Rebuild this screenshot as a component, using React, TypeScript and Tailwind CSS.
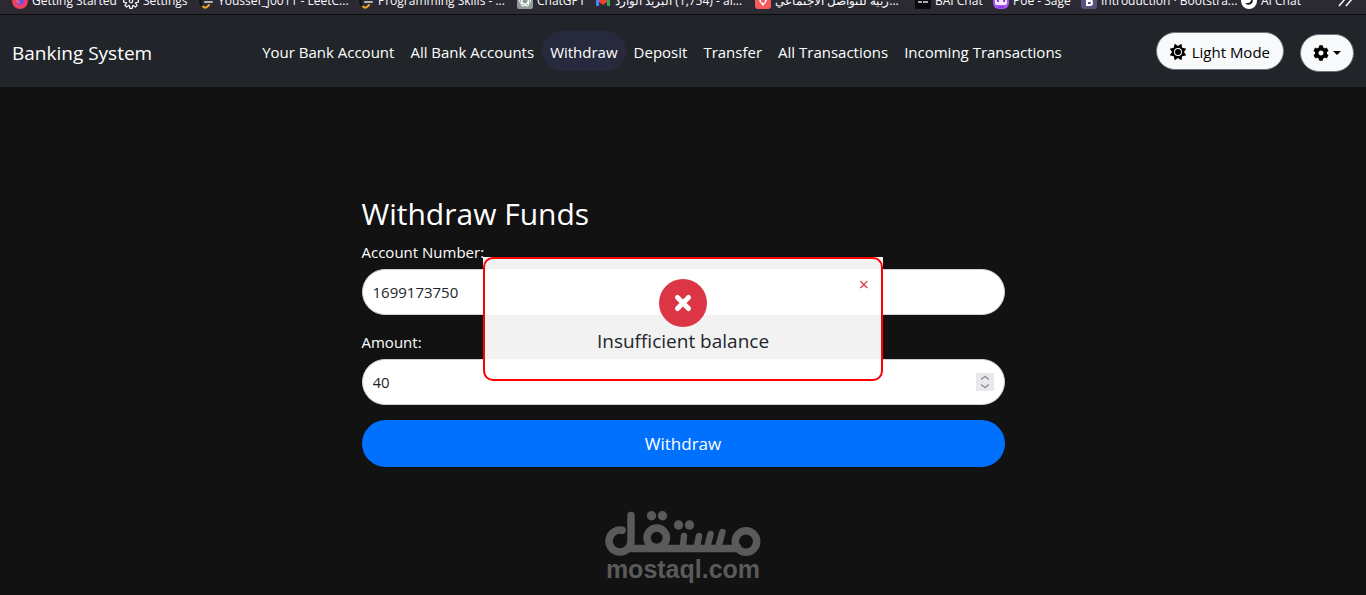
import type { ReactNode } from "react";
import { FaCog } from "react-icons/fa";
import { FaSun } from "react-icons/fa6";
import { VscSettingsGear } from "react-icons/vsc";

interface BookmarkProps {
    icon: ReactNode;
    width: string;
    children: ReactNode;
}

const links = [
    "Your Bank Account",
    "All Bank Accounts",
    "Withdraw",
    "Deposit",
    "Transfer",
    "All Transactions",
    "Incoming Transactions",
];

const FirefoxIcon = () => (
    <svg viewBox="0 0 16 16" className="size-4">
        <circle cx="8" cy="8" r="8" fill="#f0405f" />
        <path d="M1 5a8 8 0 0 0 14 7a8 8 0 0 1-14-7z" fill="#ff8a3c" />
        <circle cx="8" cy="8" r="4" fill="#7a4be8" />
        <path d="M4 7c2 0 3 1 4 3c-2 1-4-1-4-3z" fill="#ff7a45" />
    </svg>
);

const LeetCodeIcon = () => (
    <svg viewBox="0 0 16 16" className="size-4" fill="none" strokeLinecap="round" strokeWidth="2">
        <path d="M9 1L3 7q-2 2 0 4l2 2.500" stroke="#111" />
        <path d="M5 13.500q2 2 4 .5l2-2" stroke="#f0a030" />
        <path d="M7 9h7" stroke="#b3b3b3" />
    </svg>
);

const ChatGptIcon = () => (
    <svg viewBox="0 0 16 16" className="size-4" fill="none" stroke="#fff">
        <rect width="16" height="16" rx="2" fill="#8d9a97" stroke="none" />
        <ellipse cx="8" cy="8" rx="5.500" ry="3" />
        <ellipse cx="8" cy="8" rx="5.500" ry="3" transform="rotate(60 8 8)" />
        <ellipse cx="8" cy="8" rx="5.500" ry="3" transform="rotate(120 8 8)" />
    </svg>
);

const MailIcon = () => (
    <svg viewBox="0 0 16 16" className="size-4">
        <path d="M1 3h3v10H1z" fill="#4285f4" />
        <path d="M12 3h3v10h-3z" fill="#34a853" />
        <path d="M4 4l4 3l4-3v5l-4 3l-4-3z" fill="#ea4335" />
    </svg>
);

const PinIcon = () => (
    <svg viewBox="0 0 16 16" className="size-4">
        <rect width="16" height="16" rx="3" fill="#f45b5b" />
        <path d="M4 6a4 4 0 0 1 8 0c0 3-2 4-4 7c-2-3-4-4-4-7z" fill="#fff" />
        <circle cx="8" cy="8" r="2" fill="#f45b5b" />
    </svg>
);

const BaiIcon = () => (
    <svg viewBox="0 0 16 16" className="size-4">
        <rect width="16" height="16" fill="#0b0b0d" />
        <path d="M3 9h4M8 9h5" stroke="#aaa" strokeWidth="2" />
    </svg>
);

const PoeIcon = () => (
    <svg viewBox="0 0 16 16" className="size-4">
        <rect width="16" height="16" rx="6" fill="#a855f7" />
        <rect x="2" y="5" width="12" height="7" rx="2" fill="#f3e8ff" />
        <path d="M4 8h2M10 8h2M5 14h6" stroke="#8b3fe0" strokeWidth="2" />
    </svg>
);

const BootstrapIcon = () => (
    <svg viewBox="0 0 16 16" className="size-4">
        <rect width="16" height="16" rx="3" fill="#56547c" />
        <path d="M6 3v9h3a2 2 0 0 0 0-4H6h3a2 2 0 0 0 0-4H6" fill="none" stroke="#fff" strokeWidth="2" />
    </svg>
);

const AiChatIcon = () => (
    <svg viewBox="0 0 16 16" className="size-4">
        <circle cx="8" cy="8" r="8" fill="#fff" />
        <path d="M11 5a4 4 0 1 1-7 5c4 1 6-1 7-5z" fill="#16161c" />
    </svg>
);

const Bookmark = ({ icon, width, children }: BookmarkProps) => (
    <a href="#" className={`flex shrink-0 items-center gap-1 whitespace-nowrap ${width}`}>
        <span className="shrink-0">{icon}</span>
        <span>{children}</span>
    </a>
);

const BookmarksBar = () => (
    <div className="flex h-[15px] items-end overflow-hidden border-b border-[#0c0c0d] bg-[#2b2a33] px-3 pb-[5px] text-xs text-[#fbfbfe]">
        <Bookmark icon={<FirefoxIcon />} width="w-[111px]">Getting Started</Bookmark>
        <Bookmark icon={<VscSettingsGear size={16} />} width="w-[75px]">Settings</Bookmark>
        <Bookmark icon={<LeetCodeIcon />} width="w-[160px]">Youssef_J0011 - LeetC...</Bookmark>
        <Bookmark icon={<LeetCodeIcon />} width="w-[159px]">Programming Skills - ...</Bookmark>
        <Bookmark icon={<ChatGptIcon />} width="w-[78px]">ChatGPT</Bookmark>
        <Bookmark icon={<MailIcon />} width="w-[160px]"><bdi>البريد الوارد</bdi> (1,754) - al...</Bookmark>
        <Bookmark icon={<PinIcon />} width="w-[160px]"><bdi dir="rtl">...ربية للتواصل الاجتماعي</bdi></Bookmark>
        <Bookmark icon={<BaiIcon />} width="w-[78px]">BAI Chat</Bookmark>
        <Bookmark icon={<PoeIcon />} width="w-[88px]">Poe - Sage</Bookmark>
        <Bookmark icon={<BootstrapIcon />} width="w-[160px]">Introduction · Bootstra...</Bookmark>
        <Bookmark icon={<AiChatIcon />} width="w-[80px]">AI Chat</Bookmark>
        <button type="button" aria-label="More bookmarks" className="ml-auto">
            <svg viewBox="0 0 16 16" className="size-4" fill="none" stroke="currentColor" strokeWidth="1.500">
                <path d="M3 0l4 6l-6 7M10 0l4 6l-6 7" />
            </svg>
        </button>
    </div>
);

const Navbar = () => (
    <nav className="flex h-[72px] items-center bg-[#212529] px-3">
        <a href="#" className="mt-1 mr-4 text-[19px] whitespace-nowrap">Banking System</a>
        <ul className="mx-auto flex">
            {links.map((link) => (
                <li key={link}>
                    <a
                        href="#"
                        className={`block rounded-[20px] px-2 pt-[9px] pb-[7px] leading-6 whitespace-nowrap ${link === "Withdraw" ? "bg-[#27293d]" : ""}`}
                    >
                        {link}
                    </a>
                </li>
            ))}
        </ul>
        <div className="flex items-center gap-4">
            <button type="button" className="flex h-[38px] items-center gap-[6px] rounded-full border border-[#6c757d] bg-[#f8f9fa] px-[13px] pt-[2px] whitespace-nowrap text-black">
                <FaSun size={16} />
                Light Mode
            </button>
            <button type="button" aria-label="Settings" className="mt-1 flex h-[38px] items-center gap-1 rounded-full border border-[#6c757d] bg-[#f8f9fa] px-3 text-black">
                <FaCog size={16} />
                <svg viewBox="0 0 8 4" className="h-1 w-2" fill="currentColor">
                    <path d="M0 0h8L4 4z" />
                </svg>
            </button>
        </div>
    </nav>
);

const inputStyle =
    "block h-[46px] w-full rounded-full border border-[#ced4da] bg-white px-[10px] text-[#212529] outline-none [appearance:textfield]";

const WithdrawForm = () => (
    <form className="mx-auto mt-[91px] w-1/2 rounded-[10px] px-5 pt-[18px] pb-5 shadow-[0_0_10px_rgba(0,0,0,0.1)]">
        <h2 className="mb-2 text-[30px] leading-9">Withdraw Funds</h2>
        <label htmlFor="account" className="mb-[5px] block leading-6">Account Number:</label>
        <input id="account" type="text" defaultValue="1699173750" className={inputStyle} />
        <label htmlFor="amount" className="mt-[15px] mb-[5px] block leading-6">Amount:</label>
        <div className="relative">
            <input id="amount" type="number" defaultValue="40" className={inputStyle} />
            <svg viewBox="0 0 18 18" className="absolute top-[14px] right-[11px] size-[18px]" fill="none" stroke="#8f8f9d" strokeWidth="1.500">
                <rect width="18" height="18" fill="#e9e9ed" stroke="none" />
                <path d="M5 6.500l4-3l4 3M5 11.500l4 3l4-3" />
            </svg>
        </div>
        <button type="submit" className="mt-[15px] block h-[47px] w-full rounded-full bg-[#0070ff] text-[17px]">
            Withdraw
        </button>
    </form>
);

const ErrorPopup = () => (
    <div className="absolute inset-x-0 top-[257px] flex justify-center">
        <div role="alert" className="w-[400px] bg-white/95">
            <div className="relative flex flex-col items-center rounded-[10px] border-2 border-[#ff0000] pt-5 pb-6">
                <button type="button" aria-label="Close" className="absolute top-[13px] right-2 p-1 text-lg leading-4 text-[#dc3545]">
                    ×
                </button>
                <svg viewBox="0 0 48 48" className="size-12">
                    <circle cx="24" cy="24" r="24" fill="#dc3545" />
                    <path d="M18.500 18.500l11 11M29.500 18.500l-11 11" stroke="#fff" strokeWidth="5" strokeLinecap="round" />
                </svg>
                <p className="text-[19px] leading-7 text-[#212529]">Insufficient balance</p>
            </div>
        </div>
    </div>
);

const MostaqlLogo = () => (
    <div className="mt-6 flex flex-col items-center text-[#5a5a5a]">
        <svg viewBox="0 0 156 46" className="h-[46px] w-[156px]" fill="none" stroke="currentColor" strokeWidth="7.500" strokeLinecap="round" role="img" aria-label="مستقل">
            <path d="M17 19.200A11 11 0 1 0 26 30V4.500" />
            <path d="M24 37.500h112" strokeLinecap="butt" />
            <circle cx="51.700" cy="26.700" r="9.700" />
            <circle cx="141" cy="30.500" r="10.700" />
            <path d="M79 25l-1 10M94 25l-2 10M105.500 23l-3 12M117.500 21l-4 14" strokeWidth="6.500" />
            <g fill="currentColor" stroke="none">
                <circle cx="46.500" cy="4.800" r="4.700" />
                <circle cx="57.500" cy="4.800" r="4.700" />
                <circle cx="73.500" cy="14" r="4.700" />
                <circle cx="84.500" cy="14" r="4.700" />
            </g>
        </svg>
        <span className="font-['Liberation_Sans',sans-serif] text-[25px] leading-6 font-bold">mostaql.com</span>
    </div>
);

export default function App() {
    return (
        <div className="relative min-h-screen bg-[#121212] font-['Open_Sans','Noto_Sans',sans-serif] text-[15px] text-white">
            <BookmarksBar />
            <Navbar />
            <WithdrawForm />
            <MostaqlLogo />
            <ErrorPopup />
        </div>
    )
}
